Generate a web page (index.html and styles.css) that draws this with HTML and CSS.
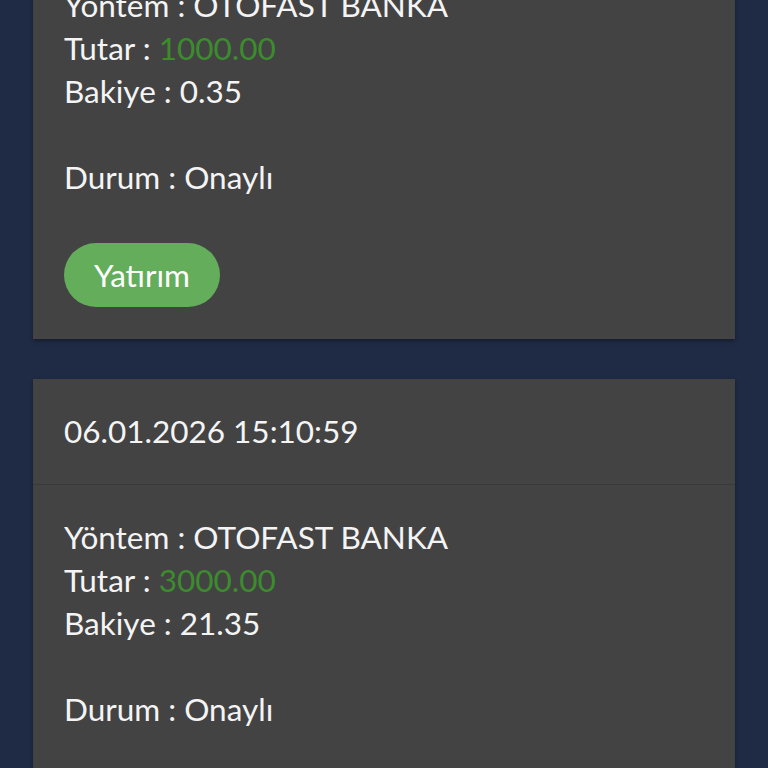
FILE: index.html
```html
<!doctype html>
<html lang="tr">
<head>
  <meta charset="UTF-8">
  <title>Yatırım Geçmişi</title>
  <link rel="stylesheet" href="styles.css">
</head>
<body>
  <div class="list">
    <div class="card first">
      <div class="card-head">06.01.2026 16:42:18</div>
      <div class="card-body">
        <p>Yöntem : OTOFAST BANKA</p>
        <p>Tutar : <span class="amount">1000.00</span></p>
        <p>Bakiye : 0.35</p>
        <p class="blank">&nbsp;</p>
        <p>Durum : Onaylı</p>
        <a href="javascript:;" class="btn">Yatırım</a>
      </div>
    </div>
    <div class="card">
      <div class="card-head">06.01.2026 15:10:59</div>
      <div class="card-body">
        <p>Yöntem : OTOFAST BANKA</p>
        <p>Tutar : <span class="amount">3000.00</span></p>
        <p>Bakiye : 21.35</p>
        <p class="blank">&nbsp;</p>
        <p>Durum : Onaylı</p>
        <a href="javascript:;" class="btn">Yatırım</a>
      </div>
    </div>
  </div>
</body>
</html>
```
FILE: styles.css
```css
html,body{margin:0;padding:0;}
body{background:#1f2a45;font-family:Lato,"Noto Sans",sans-serif;color:#f4f4f4;}
p{margin:0;}
.list{padding:0 33px 40px;display:flex;flex-direction:column;gap:40px;}
.card{background:#434343;box-shadow:0 2px 4px rgba(0,0,0,.35);}
.card.first{margin-top:-153px;}
.card-head{height:105px;line-height:105px;padding:0 31px;font-size:31.5px;border-bottom:1px solid #3a3a3a;}
.card-body{padding:31px 31px 32px;font-size:31.5px;line-height:43px;}
.amount{color:#3c8c2e;}
.btn{display:inline-block;margin-top:44px;height:64px;line-height:64px;padding:0 30px;border-radius:32px;background:#63ad5b;color:#fff;text-decoration:none;font-size:31.5px;}
```
